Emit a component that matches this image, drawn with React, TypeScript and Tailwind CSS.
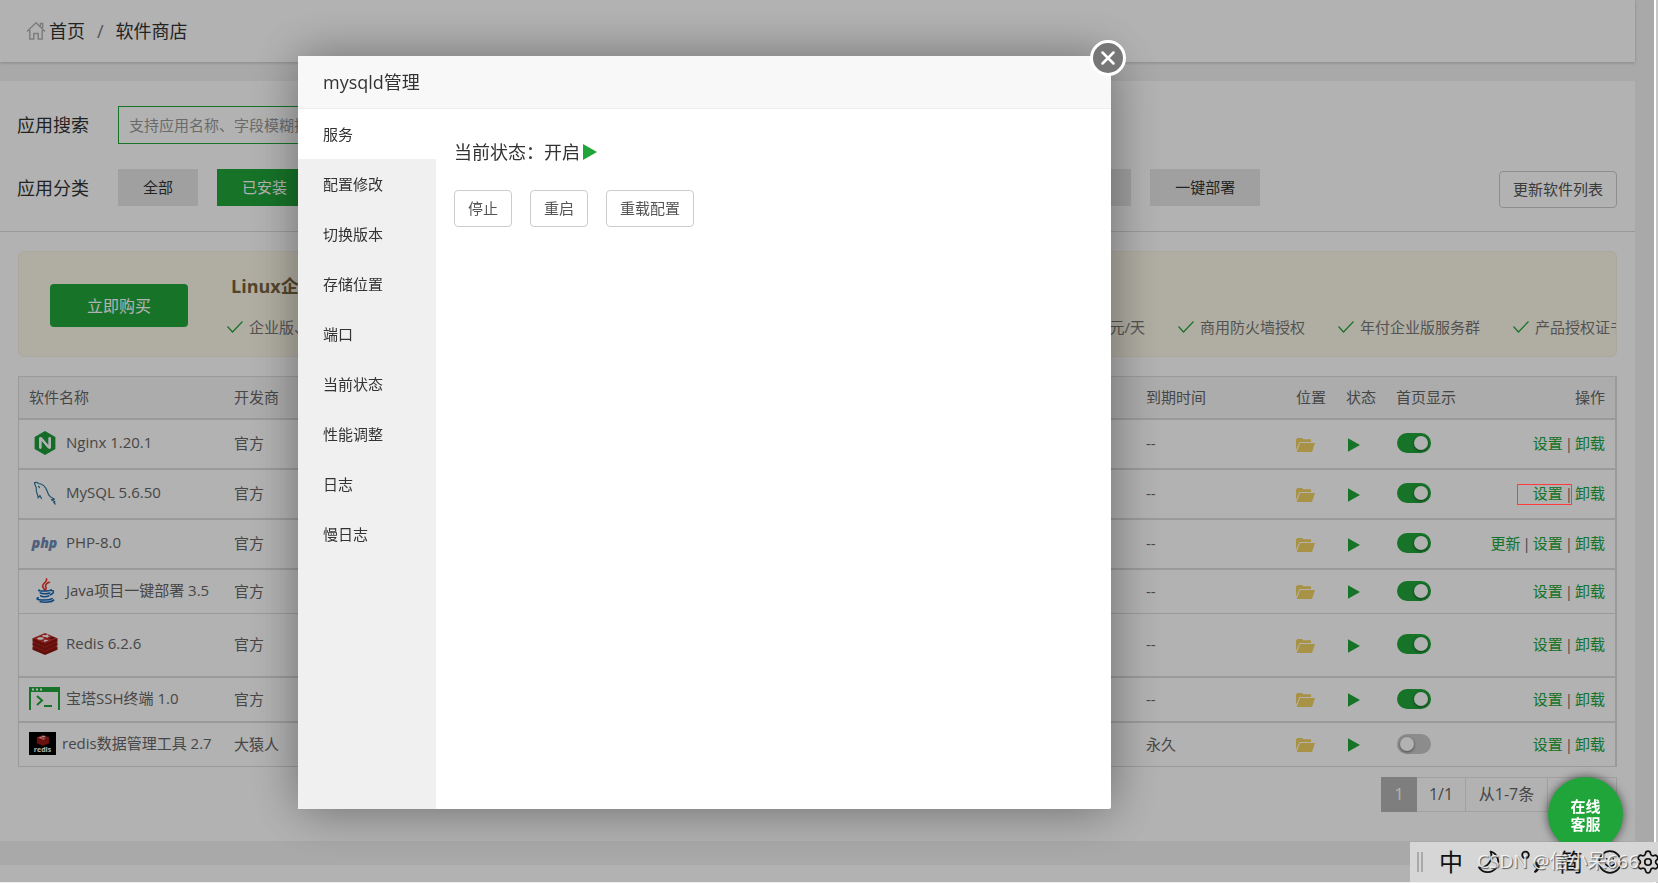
import React from "react";
import { SiNginx } from "react-icons/si";
import { Settings, Smile } from "lucide-react";

interface Software {
  name: string;
  icon: React.ReactNode;
  vendor: string;
  expire: string;
  pinned: boolean;
  row: string;
  update?: boolean;
  marked?: boolean;
}

const MysqlIcon = () => (
  <svg viewBox="0 0 24 24" className="h-6 w-6" fill="none" stroke="#33779c" strokeWidth="1.2" strokeLinecap="round" strokeLinejoin="round">
    <path d="M1.5 2C2.4.9 4.4 1.3 5.6 2.5c4.400.4 7.200 3.200 8.700 8 .7 2.300 1.400 4.200 3 5.300l4.200 2.400-3 .5 3.500 2.100-1.300.6 1.500 1.600" />
    <path d="M1.500 2c.2 1.900 1.300 3 1.700 4.700.3 1.600-.2 3 .5 4.800.8 1.800 1.200 3 1.500 5.500l1.700-2.500 1.600 3" />
    <path d="M5.500 5.200l1 1.400" />
  </svg>
);

const JavaIcon = () => (
  <svg viewBox="0 0 24 26" className="h-[25px] w-6" fill="none" strokeLinecap="round">
    <path d="M13.500 1c1.500 3-4.500 4.500-4 7.500.2 1.500 1.800 2.200 2 4M16.500 4.500c-2.500.8-4.500 2.500-3.800 4.500.5 1.300 1 2-.2 3.400" stroke="#e8392f" strokeWidth="1.700" />
    <path d="M6 12.500c-3 1.500 11 1.500 12.500-.2M7 15.500c1.500 1.200 7.500 1.200 10 .1M7.500 18.500c1.500 1.200 6 1.200 8.500.1M18.500 13c3-.6 3.300 2.800-.8 4.500M5 20.500c-6 2.500 10 3.500 14.500 1M7 24.800c5 .8 12 .4 14-1.800" stroke="#1565b5" strokeWidth="1.600" />
  </svg>
);

const RedisCubes = ({ className }: { className: string }) => (
  <svg viewBox="0 0 26 22" className={className}>
    <path d="M.5 13.500v3.200L13 22l12.500-5.300v-3.200z" fill="#8d1712" />
    <path d="M.5 13L13 7.500 25.500 13 13 18.500z" fill="#c6302b" />
    <path d="M.5 9.200v3.200L13 17.800l12.500-5.400V9.200z" fill="#8d1712" />
    <path d="M.5 9L13 3.500 25.500 9 13 14.500z" fill="#c6302b" />
    <path d="M.5 5.200v3.200L13 13.800l12.500-5.400V5.200z" fill="#8d1712" />
    <path d="M.5 5.200L13 0l12.500 5.200L13 10.600z" fill="#c6302b" />
    <path d="M10.500 2l3.300.3 1.800-1 .3 1.300 2 .6-2.100.7-.5 1.200-1.400-1.100-3.200-.3z" fill="#fff" />
    <ellipse cx="8.500" cy="5.500" rx="3.200" ry="1.200" fill="#fff" />
    <path d="M11.500 8.800l1.200-2.300 4 1.300z" fill="#fff" />
    <path d="M17 5.200l3.500-1.400 2.300 1.100-3.300 1.400z" fill="#621b1c" />
  </svg>
);

const SshIcon = () => (
  <svg viewBox="0 0 31 23" className="h-[23px] w-[31px]" fill="none">
    <path d="M0 0h31v5H0z" fill="#20a53a" />
    <path d="M1 5v18M30 5v18" stroke="#20a53a" strokeWidth="2" />
    <path d="M8 9l5 4.500L8 18M15 19h8" stroke="#20a53a" strokeWidth="2" />
    <path d="M3 1.500h2v2H3zM7 1.500h2v2H7zM11 1.500h2v2h-2z" fill="#fff" />
  </svg>
);

const RedisToolIcon = () => (
  <span className="flex h-[23px] w-[27px] flex-col items-center bg-black pt-[3px]">
    <RedisCubes className="h-[11px] w-[14px]" />
    <span className="text-[7px] leading-[7px] font-bold text-white">redis</span>
  </span>
);

const software: Software[] = [
  { name: "Nginx 1.20.1", icon: <SiNginx className="size-6 text-[#1f9a3a]" />, vendor: "官方", expire: "--", pinned: true, row: "h-[50px] *:border-b-2" },
  { name: "MySQL 5.6.50", icon: <MysqlIcon />, vendor: "官方", expire: "--", pinned: true, row: "h-[50px] *:border-b-2", marked: true },
  { name: "PHP-8.0", icon: <span className="text-sm leading-5 font-extrabold text-[#7289b5] italic">php</span>, vendor: "官方", expire: "--", pinned: true, row: "h-[50px] *:border-b-2", update: true },
  { name: "Java项目一键部署 3.5", icon: <JavaIcon />, vendor: "官方", expire: "--", pinned: true, row: "h-11 *:border-b" },
  { name: "Redis 6.2.6", icon: <RedisCubes className="h-[22px] w-[26px]" />, vendor: "官方", expire: "--", pinned: true, row: "h-16 *:border-b-2" },
  { name: "宝塔SSH终端 1.0", icon: <SshIcon />, vendor: "官方", expire: "--", pinned: true, row: "h-[45px] *:border-b-2" },
  { name: "redis数据管理工具 2.7", icon: <RedisToolIcon />, vendor: "大猿人", expire: "永久", pinned: false, row: "h-11 *:border-b" },
];

const categories = ["全部", "已安装", "运行环境", "系统工具", "宝塔插件", "专业版插件", "企业版插件", "第三方应用", "一键部署"];
const menu = ["服务", "配置修改", "切换版本", "存储位置", "端口", "当前状态", "性能调整", "日志", "慢日志"];

const HomeIcon = () => (
  <svg viewBox="0 0 20 20" className="h-5 w-5" fill="none" stroke="#b4b4b4" strokeWidth="1.500">
    <path d="M1 10.500L10 1.700l9 8.800M14.500 5V2.500h2.200V7M3.800 9v9h4v-5.500h4.400V18h4V9" />
  </svg>
);

const FolderIcon = () => (
  <svg viewBox="0 0 19 14" className="h-[14px] w-[19px]" fill="#f0d264">
    <path d="M0 12V1.500L1.500 0H6l1.300 1.200H15V4H3.500z" />
    <path d="M4 5h15l-3 9H.7z" />
  </svg>
);

const PlayIcon = ({ className }: { className: string }) => (
  <svg viewBox="0 0 14 16" className={className} fill="#20a53a">
    <path d="M0 0l14 8-14 8z" />
  </svg>
);

const Perk = ({ children }: { children: React.ReactNode }) => (
  <li className="flex items-center gap-[6px]">
    <svg viewBox="0 0 16 12" className="h-3 w-4" fill="none" stroke="#20a53a" strokeWidth="1.200">
      <path d="M.5 5.500l5 5.500L15.500.5" />
    </svg>
    {children}
  </li>
);

function SoftwareTable() {
  return (
    <table className="w-full table-fixed border-separate border-spacing-0 border-t border-r-2 border-l border-[#ddd] text-left text-[15px] leading-5 text-[#666]">
      <colgroup>
        <col className="w-[205px]" />
        <col className="w-[80px]" />
        <col />
        <col className="w-[150px]" />
        <col className="w-[50px]" />
        <col className="w-[50px]" />
        <col className="w-[90px]" />
        <col className="w-[139px]" />
      </colgroup>
      <thead>
        <tr className="h-[43px] bg-[#f6f6f6] *:border-b-2 *:border-[#ddd] *:px-[10px] *:pb-[2px] *:font-normal *:whitespace-nowrap">
          <th>软件名称</th>
          <th>开发商</th>
          <th></th>
          <th>到期时间</th>
          <th>位置</th>
          <th>状态</th>
          <th>首页显示</th>
          <th className="text-right">操作</th>
        </tr>
      </thead>
      <tbody>
        {software.map((item) => (
          <tr key={item.name} className={`*:border-[#ddd] *:px-[10px] *:pb-[2px] *:whitespace-nowrap ${item.row}`}>
            <td>
              <div className="flex items-center gap-[6px]">
                {item.pinned ? <span className="flex w-[31px] shrink-0 justify-center">{item.icon}</span> : item.icon}
                <span className="pb-[2px]">{item.name}</span>
              </div>
            </td>
            <td>{item.vendor}</td>
            <td></td>
            <td>{item.expire}</td>
            <td className="pt-[3px]">
              <FolderIcon />
            </td>
            <td className="pt-[3px]">
              <PlayIcon className="ml-[2px] h-[14px] w-3" />
            </td>
            <td>
              <input
                type="checkbox"
                role="switch"
                aria-label={`首页显示 ${item.name}`}
                defaultChecked={item.pinned}
                className="ml-px block h-5 w-[34px] appearance-none rounded-full bg-[#c9c9c9] before:m-[3px] before:block before:size-[14px] before:rounded-full before:bg-white before:shadow-[0_1px_3px_rgba(0,0,0,0.5)] checked:bg-[#20a53a] checked:before:ml-[17px]"
              />
            </td>
            <td className="text-right text-[#666]">
              <div className="flex justify-end gap-[2px]">
                {item.update && (
                  <>
                    <a href="#" className="text-[#20a53a]">更新</a>
                    <span>|</span>
                  </>
                )}
                <a href="#" className="relative text-[#20a53a]">
                  设置
                  {item.marked && <span className="absolute top-px -left-4 z-50 h-[21px] w-[55px] border border-[#ff3b3b]" />}
                </a>
                <span>|</span>
                <a href="#" className="text-[#20a53a]">卸载</a>
              </div>
            </td>
          </tr>
        ))}
      </tbody>
    </table>
  );
}

function ManageDialog() {
  return (
    <div role="dialog" aria-label="mysqld管理" className="absolute top-14 left-[298px] flex h-[753px] w-[813px] flex-col rounded-xs bg-white shadow-[1px_1px_50px_rgba(0,0,0,0.4)]">
      <h2 className="h-[53px] border-b border-[#eee] bg-[#f8f8f8] px-[25px] text-lg leading-[52px] text-[#333]">mysqld管理</h2>
      <button aria-label="关闭" className="absolute -top-4 -right-[15px] flex size-9 items-center justify-center rounded-full border-[3px] border-white bg-[#777]">
        <svg viewBox="0 0 14 14" className="size-[14px]" stroke="#fff" strokeWidth="2.500" strokeLinecap="round">
          <path d="M1.500 1.500l11 11M12.500 1.500l-11 11" />
        </svg>
      </button>
      <div className="flex flex-1">
        <nav className="flex w-[138px] flex-col bg-[#f0f0f0]">
          {menu.map((label, i) => (
            <button key={label} className={`h-[50px] px-[25px] text-left text-[15px] text-[#333] ${i === 0 ? "bg-white" : ""}`}>
              {label}
            </button>
          ))}
        </nav>
        <section className="flex-1 px-[18px] pt-[29px]">
          <p className="flex items-center text-lg text-[#333]">
            当前状态：开启
            <PlayIcon className="ml-[3px] h-4 w-[14px]" />
          </p>
          <div className="mt-6 flex gap-[18px]">
            {["停止", "重启", "重载配置"].map((label) => (
              <button key={label} className="h-[37px] rounded-sm border border-[#ccc] bg-white px-[13px] text-[15px] text-[#555]">
                {label}
              </button>
            ))}
          </div>
        </section>
      </div>
    </div>
  );
}

function InputBar() {
  return (
    <div className="fixed right-0 bottom-px z-50 flex h-10 w-[248px] items-center overflow-hidden bg-[#d6d6d6] text-2xl text-[#111] *:shrink-0">
      <span className="ml-[7px] h-5 w-[6px] border-x-2 border-[#aaa]" />
      <span className="ml-4">中</span>
      <svg viewBox="0 0 24 24" className="ml-[14px] size-6" fill="none" stroke="currentColor" strokeWidth="1.800" strokeLinejoin="round">
        <path d="M13.500 1.500A10.500 10.500 0 1 1 2 17.500 11.500 11.500 0 0 0 13.500 1.500z" />
      </svg>
      <svg viewBox="0 0 22 24" className="ml-5 h-6 w-[22px]" fill="none" stroke="currentColor" strokeWidth="1.800">
        <circle cx="4.500" cy="5" r="3.300" />
        <path d="M15.500 12.500a2.200 2.200 0 1 0 1 4.200c0 2-1 4-3 5.500 4-1.500 6.500-8.500 2-9.700z" fill="currentColor" />
      </svg>
      <span className="ml-4">简</span>
      <Smile className="ml-[14px] size-[26px]" strokeWidth={1.6} />
      <Settings className="ml-3 size-[26px]" strokeWidth={1.6} />
      <span className="absolute left-[67px] text-[19px] whitespace-nowrap text-white/80 [text-shadow:1px_1px_1px_#555]">CSDN @信小呆666</span>
    </div>
  );
}

export default function App() {
  return (
    <div className="flex min-h-screen bg-[#f2f2f2] font-['Open_Sans','Noto_Sans_CJK_SC',sans-serif] text-[#333]">
      <div className="flex min-w-0 flex-1 flex-col">
        <header className="mr-[19px] flex h-[62px] items-center bg-white pl-[26px] text-lg shadow-[0_1px_3px_rgba(0,0,0,0.2)]">
          <HomeIcon />
          <a href="#" className="ml-[3px]">首页</a>
          <span className="mx-3 text-[#777]">/</span>
          <span>软件商店</span>
        </header>
        <main className="mt-[19px] mr-[19px] bg-white pb-[29px]">
          <div className="border-b border-[#ddd] pt-[25px] pr-[18px] pb-[23px] pl-[17px]">
            <div className="flex items-center">
              <label htmlFor="app-search" className="w-[101px] text-lg">应用搜索</label>
              <input id="app-search" placeholder="支持应用名称、字段模糊搜索" className="h-[38px] w-[375px] border border-[#20a53a] px-[10px] text-[15px] placeholder:text-[#999]" />
            </div>
            <div className="mt-[23px] flex items-center">
              <span className="w-[101px] text-lg">应用分类</span>
              <div className="flex gap-[19px]">
                {categories.map((name) => (
                  <button key={name} className={`h-[37px] px-[25px] text-[15px] whitespace-nowrap ${name === "已安装" ? "bg-[#20a53a] text-white" : "bg-[#e6e6e6]"}`}>
                    {name}
                  </button>
                ))}
              </div>
              <button className="mt-1 ml-auto h-[37px] rounded-sm border border-[#ccc] px-[13px] text-[15px] text-[#555]">更新软件列表</button>
            </div>
          </div>
          <div className="px-[18px] pt-[19px]">
            <div className="flex h-[106px] items-center overflow-hidden rounded-md border border-[#f7f0de] bg-[#fcf8e8] pt-[3px] pl-[31px]">
              <button className="h-[43px] w-[138px] shrink-0 rounded-sm bg-[#20a53a] text-base text-white">立即购买</button>
              <div className="ml-[39px] min-w-0 flex-1">
                <h3 className="pl-1 text-lg leading-6 font-bold text-[#77643f]">Linux企业版</h3>
                <ul className="mt-[19px] -mr-[9px] flex gap-[33px] text-[15px] leading-5 whitespace-nowrap text-[#777]">
                  <Perk>企业版、专业版插件</Perk>
                  <li className="ml-auto">低至2.43元/天</li>
                  <Perk>商用防火墙授权</Perk>
                  <Perk>年付企业版服务群</Perk>
                  <Perk>产品授权证书</Perk>
                </ul>
              </div>
            </div>
            <div className="mt-[19px]">
              <SoftwareTable />
            </div>
            <div className="mt-[10px] flex justify-end">
              <div className="flex h-[35px] border border-[#e5e5e5] text-base leading-[33px] text-[#666]">
                <span className="-my-px -ml-px w-9 bg-[#b5b5b5] text-center leading-[35px] text-white">1</span>
                <span className="w-[49px] border-r border-[#e5e5e5] text-center">1/1</span>
                <span className="w-[82px] border-r border-[#e5e5e5] text-center">从1-7条</span>
                <span className="w-[68px]" />
              </div>
            </div>
          </div>
        </main>
        <footer className="mt-6 flex-1 border-b border-[#f0f0f0] bg-white" />
      </div>
      <div className="w-1 border-l-2 border-white bg-[#c8c8c8]" />

      <div className="fixed inset-0 right-1 bottom-px z-40 bg-black/30">
        <ManageDialog />
      </div>
      <button className="fixed right-[35px] bottom-[31px] z-50 size-[75px] rounded-full bg-[#20a53a] px-5 text-[15px] leading-[18px] font-bold text-white shadow-[0_0_10px_rgba(0,0,0,0.6)]">
        在线
        <br />
        客服
      </button>
      <InputBar />
    </div>
  );
}
